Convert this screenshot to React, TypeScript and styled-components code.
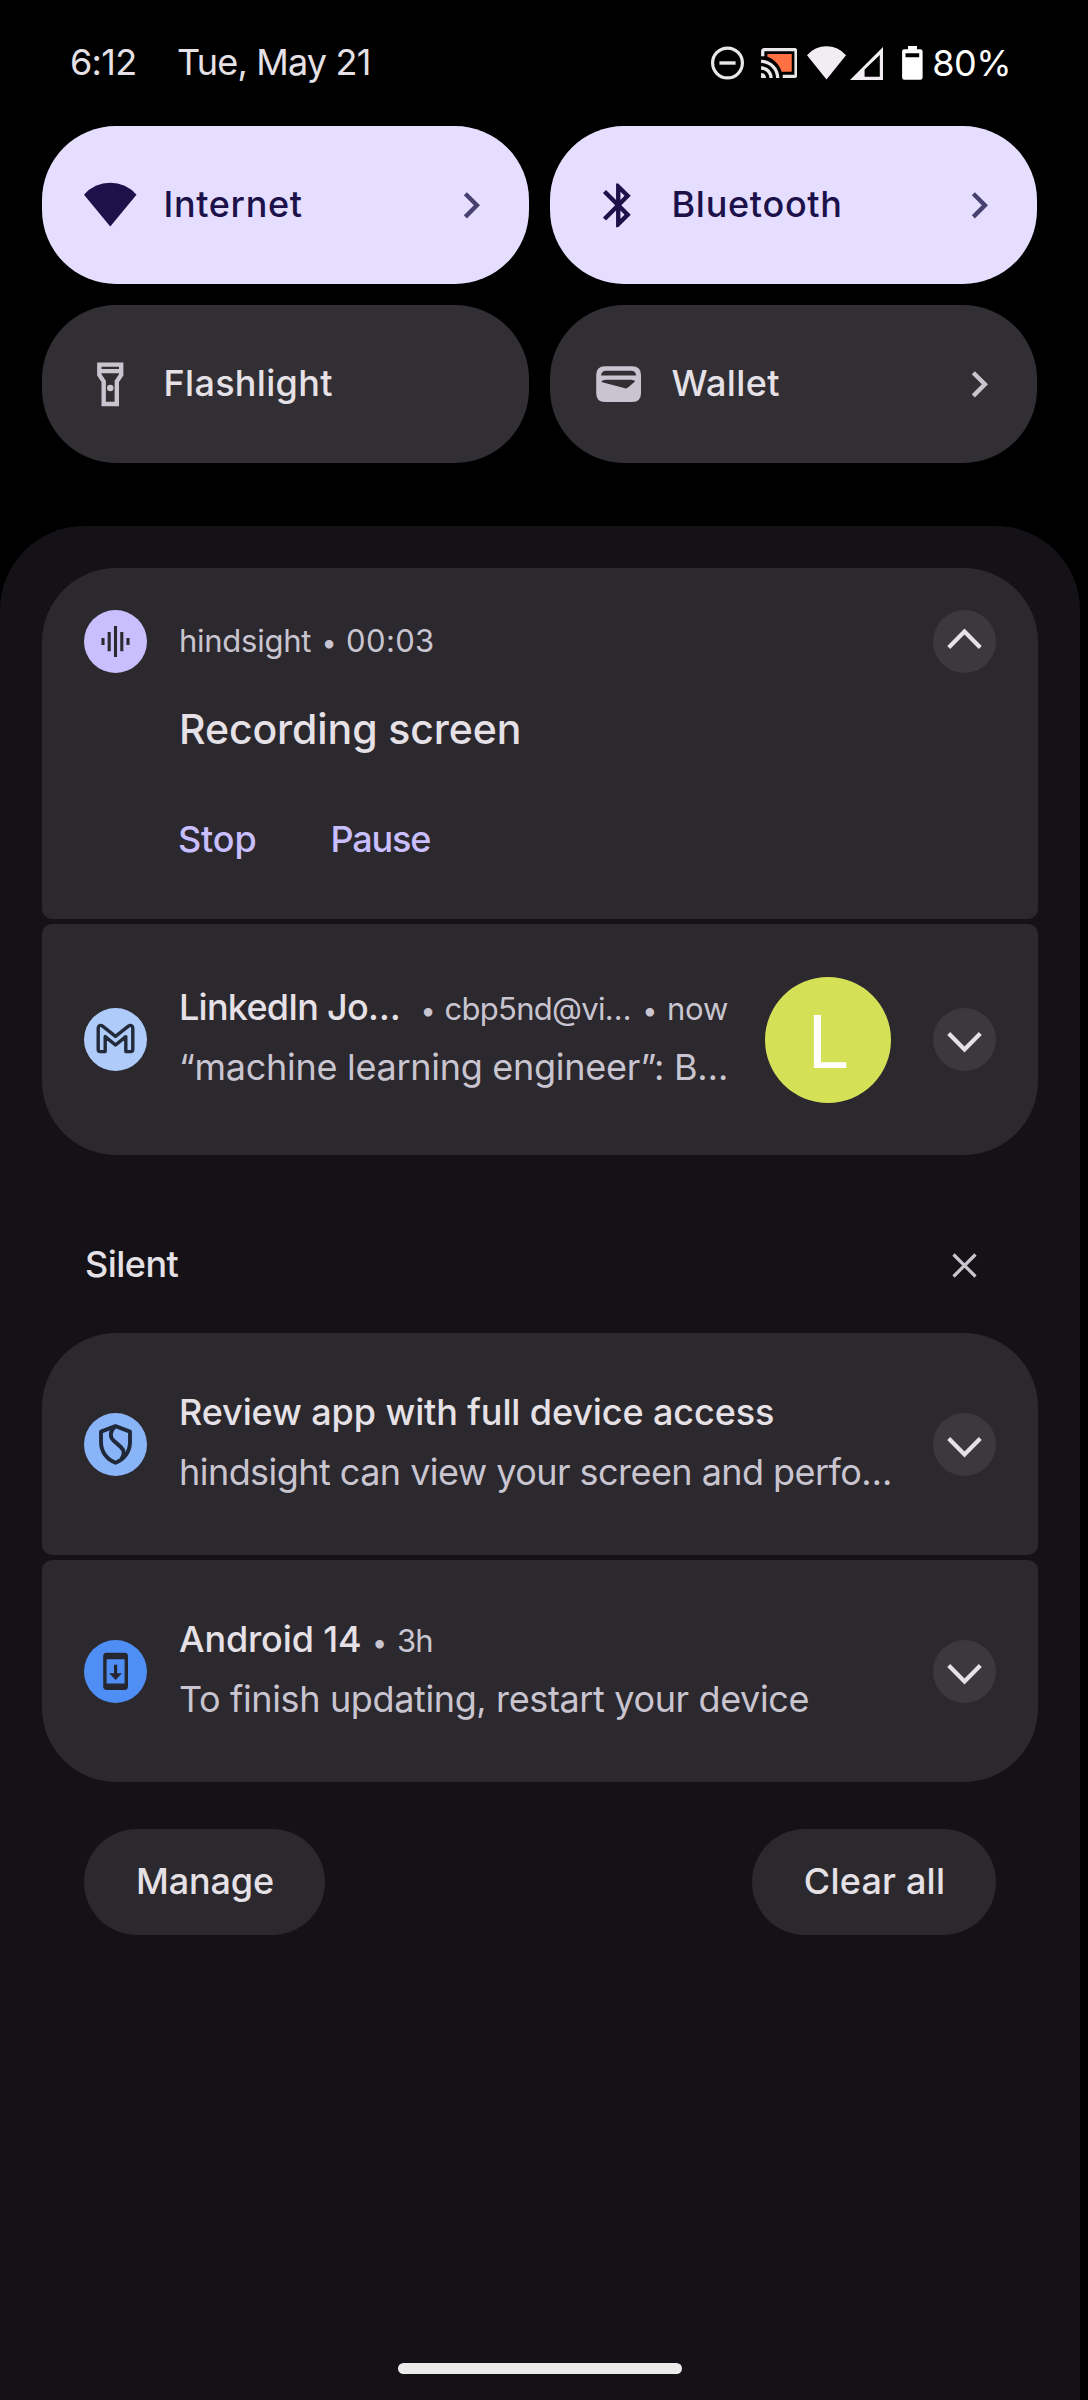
import React from 'react';
import styled, { createGlobalStyle } from 'styled-components';

const GlobalStyle = createGlobalStyle`
  *, *::before, *::after { box-sizing: border-box; }
  html, body { margin: 0; padding: 0; background: #000; }
  body { font-family: Inter, Roboto, sans-serif; }
  button { font-family: inherit; border: 0; margin: 0; padding: 0; background: none; }
  svg { display: block; flex: none; }
`;

const Screen = styled.div`
  width: 1088px;
  height: 2400px;
  display: flex;
  flex-direction: column;
  background: #000;
  overflow: hidden;
`;

const StatusBar = styled.header`
  height: 126px;
  padding: 0 77px 0 70px;
  display: flex;
  align-items: center;
  justify-content: space-between;
`;

const Label = styled.span<{ $size?: number; $weight?: number; $tracking?: number; $color?: string }>`
  font-size: ${p => p.$size ?? 36}px;
  font-weight: ${p => p.$weight ?? 400};
  letter-spacing: ${p => p.$tracking ?? 0}px;
  color: ${p => p.$color ?? '#e5e1e6'};
  line-height: 60px;
  white-space: nowrap;
`;

const ClockGroup = styled.div`
  display: grid;
  grid-template-columns: 107px auto;
  margin-bottom: 2px;
`;

const StatusIcons = styled.div`
  display: flex;
  align-items: center;
`;

const IconSlot = styled.span<{ $after: number }>`
  display: flex;
  margin-right: ${p => p.$after}px;
`;

const Tiles = styled.section`
  width: 995px;
  margin-left: 42px;
  display: grid;
  grid-template-columns: 1fr 1fr;
  grid-auto-rows: 158px;
  gap: 21px;
`;

const Tile = styled.button<{ $active?: boolean }>`
  display: flex;
  align-items: center;
  padding: 0 32px 0 42px;
  border-radius: 74px;
  background: ${p => (p.$active ? '#e5deff' : '#312f34')};
  color: ${p => (p.$active ? '#1c1149' : '#c9c5d0')};
`;

const TileLabel = styled(Label)`
  flex: 1;
  margin: 0 0 2px 27px;
  text-align: left;
`;

const Shade = styled.main`
  width: 1080px;
  flex: 1;
  margin-top: 63px;
  padding: 42px 42px 26px;
  display: flex;
  flex-direction: column;
  border-radius: 84px 84px 0 0;
  background: #141217;
`;

const Group = styled.section`
  display: flex;
  flex-direction: column;
  gap: 5px;
`;

const Card = styled.article<{ $height: number }>`
  height: ${p => p.$height}px;
  padding: 0 42px;
  display: flex;
  align-items: center;
  border-radius: 10px;
  background: #2b282e;

  &:first-child { border-top-left-radius: 74px; border-top-right-radius: 74px; }
  &:last-child { border-bottom-left-radius: 74px; border-bottom-right-radius: 74px; }
`;

const ExpandedCard = styled(Card)`
  flex-direction: column;
  align-items: stretch;
  padding-top: 42px;
`;

const HeaderRow = styled.div`
  height: 63px;
  display: flex;
  align-items: center;
`;

const AppIcon = styled.span<{ $color: string }>`
  width: 63px;
  height: 63px;
  flex: none;
  border-radius: 50%;
  background: ${p => p.$color};
`;

const ExpandButton = styled.button`
  width: 63px;
  height: 63px;
  flex: none;
  border-radius: 50%;
  background: #3b383e;
`;

const Body = styled.div<{ $lift?: number }>`
  flex: 1;
  min-width: 0;
  margin: 0 0 ${p => p.$lift ?? 0}px 32px;
  display: flex;
  flex-direction: column;
`;

const TextLine = styled.div`
  height: 60px;
  display: flex;
  align-items: baseline;
`;

const Dot = styled.span<{ $before: number; $after: number }>`
  width: 8px;
  margin: 0 ${p => p.$after}px 0 ${p => p.$before}px;
  display: flex;
  justify-content: center;
  font-size: 27px;
  line-height: 60px;
  color: #c9c5d0;
`;

const ExpandedTitle = styled(Label)`
  margin: 26px 0 0 95px;
`;

const Actions = styled.div`
  margin: 50px 0 0 94px;
  display: flex;
  gap: 74px;
`;

const Avatar = styled.span`
  width: 126px;
  height: 126px;
  flex: none;
  margin-right: 42px;
  padding-top: 5px;
  display: flex;
  align-items: center;
  justify-content: center;
  border-radius: 50%;
  background: #d4e157;
  color: #fff;
  font: 400 75px/1 Roboto, sans-serif;
`;

const SectionHeader = styled.div`
  height: 178px;
  padding: 42px 42px 0;
  display: flex;
  align-items: center;
  justify-content: space-between;
`;

const SectionTitle = styled(Label)`
  margin: 0 0 3px 1px;
`;

const ClearSection = styled.button`
  width: 63px;
  height: 63px;
  display: flex;
  align-items: center;
  justify-content: center;
`;

const Footer = styled.div`
  margin-top: 47px;
  padding: 0 42px;
  display: flex;
  justify-content: space-between;
`;

const FooterButton = styled.button<{ $width: number }>`
  width: ${p => p.$width}px;
  height: 106px;
  padding: 0 0 3px 1px;
  border-radius: 53px;
  background: #2b282e;
`;

const HomeHandle = styled.div`
  width: 284px;
  height: 11px;
  margin: auto auto 0;
  border-radius: 6px;
  background: #ecebec;
`;

const MUTED = '#c9c5d0';
const INK = '#2b282e';

const TileChevron = ({ color }: { color: string }) => (
  <svg width="52.5" height="52.5" viewBox="0 0 24 24" fill={color}>
    <path d="M10 6 8.59 7.41 13.17 12l-4.58 4.59L10 18l6-6z" />
  </svg>
);

const Expand = ({ up }: { up?: boolean }) => (
  <ExpandButton>
    <svg width="63" height="63" viewBox="0 0 63 63" fill="none" stroke="#e5e1e6" strokeWidth="4.2">
      <path d={up ? 'M15.7 37.6 31.5 21.6 47.3 37.6' : 'M15.7 25.4 31.5 41.4 47.3 25.4'} />
    </svg>
  </ExpandButton>
);

const WifiIcon = () => (
  <svg width="52.5" height="52.5" viewBox="0 0 52.5 52.5" fill="currentColor">
    <path d="M0 15.7A34.6 34.6 0 0 1 52.5 15.7L26.25 47.5z" />
  </svg>
);

const BluetoothIcon = () => (
  <svg width="52.5" height="52.5" viewBox="0 0 24 24" fill="currentColor">
    <path d="M17.71 7.71 12 2h-1v7.59L6.41 5 5 6.41 10.59 12 5 17.59 6.41 19 11 14.41V22h1l5.71-5.71L13.41 12l4.3-4.29zM13 5.83l1.88 1.88L13 9.59V5.83zm1.88 10.46L13 18.17v-3.76l1.88 1.88z" />
  </svg>
);

const FlashlightIcon = () => (
  <svg width="52.5" height="52.5" viewBox="0 0 24 24" fill="currentColor">
    <path d="M18 2H6v6l2 3v11h8V11l2-3V2zm-2 2v1H8V4h8zm-2 6.4V20h-4v-9.61l-2-3V7h8v.39l-2 3.01z" />
    <circle cx="12" cy="13.7" r="1.5" />
  </svg>
);

const WalletIcon = () => (
  <svg width="52.5" height="52.5" viewBox="0 0 52.5 52.5" fill="currentColor" fillRule="evenodd">
    <path d="M13 8.3H40.2Q49 8.3 49 17.1V35.3Q49 44.1 40.2 44.1H13Q4.2 44.1 4.2 35.3V17.1Q4.2 8.3 13 8.3ZM9 17.4H44.2Q43.6 12.7 39.2 12.7H14Q9.6 12.7 9 17.4ZM9.4 24.1 33 30.3Q34.7 30.7 36 29.6L43.2 23.2Q42 21.7 39.2 21.7H14Q10.4 21.7 9.4 24.1Z" />
  </svg>
);

const DndIcon = () => (
  <svg width="33" height="34" viewBox="0 0 33 34" fill="none" stroke="#e9e7ea" strokeWidth="3.2">
    <circle cx="16.5" cy="17" r="14.9" />
    <path d="M8.4 17h16.2" strokeWidth="3.4" />
  </svg>
);

const CastIcon = () => (
  <svg width="36.8" height="30" viewBox="1 3 22 18" fill="#e9e7ea">
    <path fill="#ff7043" d="M19.4 6.6H4.8V8.3c4 1.4 7.3 4.8 8.5 8.9h6.1z" />
    <path d="M1 18v3h3c0-1.66-1.34-3-3-3zm0-4v2c2.76 0 5 2.24 5 5h2c0-3.87-3.13-7-7-7zm0-4v2c4.97 0 9 4.03 9 9h2c0-6.08-4.93-11-11-11zm20-7H3c-1.1 0-2 .9-2 2v3h2V5h18v14h-7v2h7c1.1 0 2-.9 2-2V5c0-1.1-.9-2-2-2z" />
  </svg>
);

const StatusWifiIcon = () => (
  <svg width="39" height="34" viewBox="0 0 39 34" fill="#f1edf3">
    <path d="M0 9.2A25.6 25.6 0 0 1 39 9.2L19.5 33.5z" />
  </svg>
);

const SignalIcon = () => (
  <svg width="33" height="33" viewBox="0 0 33 33" fill="#f1edf3" fillRule="evenodd">
    <path d="M33 0V33H0zM29.8 8 14.6 22.4V29.8H29.8z" />
  </svg>
);

const BatteryIcon = () => (
  <svg width="21" height="34" viewBox="0 0 21 34" fill="#fff" fillRule="evenodd">
    <path d="M6 0h9v3.2h3.4q2.2 0 2.2 2.2v26.2q0 2.2-2.2 2.2H2.3Q.1 33.8.1 31.6V5.4q0-2.2 2.2-2.2H6zM3.5 7.2v4h13.7v-4z" />
  </svg>
);

const WaveIcon = () => (
  <svg width="63" height="63" viewBox="0 0 63 63" stroke={INK} strokeWidth="3.1">
    <path d="M19 28v7M25.2 22v19.2M31.5 16v31M37.8 22v19.2M44 28v7" />
  </svg>
);

const MailIcon = () => (
  <svg width="63" height="63" viewBox="0 0 63 63" fill="none" stroke="#232b3a" strokeWidth="3.4" strokeLinejoin="round">
    <path d="M14.2 41.5V20C14.2 17.3 16.6 16.7 18.6 18.2L31.5 28.3L44.4 18.2C46.4 16.7 48.8 17.3 48.8 20V41.5Q48.8 43.6 46.7 43.6H41.8V28.6L31.5 37L21.2 28.6V43.6H16.3Q14.2 43.6 14.2 41.5Z" />
  </svg>
);

const ShieldIcon = () => (
  <svg width="63" height="63" viewBox="0 0 63 63" fill="none" stroke="#20293a" strokeWidth="3.9" strokeLinejoin="round">
    <path d="M31.5 13.2 46 18.6V29C46 39 40 46.6 31.5 49.8C23 46.6 17 39 17 29V18.6Z" />
    <path d="M30.5 14C26.2 18 25.6 23.6 29.2 27.2L36.8 34C40.8 37.8 40.2 42 37.5 46" />
  </svg>
);

const UpdateIcon = () => (
  <svg width="63" height="63" viewBox="0 0 63 63" fill="#25262f" fillRule="evenodd">
    <path d="M22.6 12.7H40.6Q44 12.7 44 16.1V46.6Q44 50 40.6 50H22.6Q19.2 50 19.2 46.6V16.1Q19.2 12.7 22.6 12.7ZM22.6 19.3V43.6H40.6V19.3Z" />
    <path d="M30 24.7h3.2v8.5h4.7L31.6 40l-6.4-6.8H30z" />
  </svg>
);

export default function App() {
  return (
    <>
      <GlobalStyle />
      <Screen>
        <StatusBar>
          <ClockGroup>
            <Label $tracking={-0.7}>6:12</Label>
            <Label $tracking={-0.82}>Tue, May 21</Label>
          </ClockGroup>
          <StatusIcons>
            <IconSlot $after={17}><DndIcon /></IconSlot>
            <IconSlot $after={10}><CastIcon /></IconSlot>
            <IconSlot $after={3.5}><StatusWifiIcon /></IconSlot>
            <IconSlot $after={19}><SignalIcon /></IconSlot>
            <IconSlot $after={9.5}><BatteryIcon /></IconSlot>
            <Label $tracking={-0.56} $color="#fff">80%</Label>
          </StatusIcons>
        </StatusBar>

        <Tiles>
          <Tile $active>
            <WifiIcon />
            <TileLabel $weight={500} $tracking={0.65} $color="#1c1149">Internet</TileLabel>
            <TileChevron color="#48406f" />
          </Tile>
          <Tile $active>
            <BluetoothIcon />
            <TileLabel $weight={500} $tracking={0.71} $color="#1c1149">Bluetooth</TileLabel>
            <TileChevron color="#48406f" />
          </Tile>
          <Tile>
            <FlashlightIcon />
            <TileLabel $weight={500} $tracking={0.31}>Flashlight</TileLabel>
          </Tile>
          <Tile>
            <WalletIcon />
            <TileLabel $weight={500} $tracking={0.35}>Wallet</TileLabel>
            <TileChevron color={MUTED} />
          </Tile>
        </Tiles>

        <Shade>
          <Group>
            <ExpandedCard $height={351}>
              <HeaderRow>
                <AppIcon $color="#c9bfff"><WaveIcon /></AppIcon>
                <Body $lift={2}>
                  <TextLine>
                    <Label $size={31} $tracking={-0.27} $color={MUTED}>hindsight</Label>
                    <Dot $before={14} $after={13}>•</Dot>
                    <Label $size={31} $tracking={0.35} $color={MUTED}>00:03</Label>
                  </TextLine>
                </Body>
                <Expand up />
              </HeaderRow>
              <ExpandedTitle $size={41} $weight={500} $tracking={-0.1}>Recording screen</ExpandedTitle>
              <Actions>
                <Label $weight={500} $tracking={-0.17} $color="#c9bfff">Stop</Label>
                <Label $weight={500} $tracking={-1.19} $color="#c9bfff">Pause</Label>
              </Actions>
            </ExpandedCard>

            <Card $height={231}>
              <AppIcon $color="#aecbfa"><MailIcon /></AppIcon>
              <Body $lift={5}>
                <TextLine>
                  <Label $weight={500} $tracking={-0.75}>LinkedIn Jo…</Label>
                  <Dot $before={24} $after={12.5}>•</Dot>
                  <Label $size={31} $tracking={-0.72} $color={MUTED}>cbp5nd@vi…</Label>
                  <Dot $before={15} $after={13}>•</Dot>
                  <Label $size={31} $tracking={-0.12} $color={MUTED}>now</Label>
                </TextLine>
                <TextLine>
                  <Label $tracking={-0.28} $color={MUTED}>“machine learning engineer”: B…</Label>
                </TextLine>
              </Body>
              <Avatar>L</Avatar>
              <Expand />
            </Card>
          </Group>

          <SectionHeader>
            <SectionTitle $weight={500} $tracking={-0.53}>Silent</SectionTitle>
            <ClearSection>
              <svg width="25" height="25" viewBox="0 0 25 25" stroke={MUTED} strokeWidth="3.2">
                <path d="M1.5 1.5 23.5 23.5M23.5 1.5 1.5 23.5" />
              </svg>
            </ClearSection>
          </SectionHeader>

          <Group>
            <Card $height={222}>
              <AppIcon $color="#8ab4f8"><ShieldIcon /></AppIcon>
              <Body $lift={5}>
                <TextLine>
                  <Label $weight={500} $tracking={-0.11}>Review app with full device access</Label>
                </TextLine>
                <TextLine>
                  <Label $tracking={-0.55} $color={MUTED}>hindsight can view your screen and perfo…</Label>
                </TextLine>
              </Body>
              <Expand />
            </Card>

            <Card $height={222}>
              <AppIcon $color="#4f8ff5"><UpdateIcon /></AppIcon>
              <Body $lift={4}>
                <TextLine>
                  <Label $weight={500} $tracking={-0.14}>Android 14</Label>
                  <Dot $before={14} $after={13.5}>•</Dot>
                  <Label $size={31} $tracking={-1} $color={MUTED}>3h</Label>
                </TextLine>
                <TextLine>
                  <Label $tracking={-0.37} $color={MUTED}>To finish updating, restart your device</Label>
                </TextLine>
              </Body>
              <Expand />
            </Card>
          </Group>

          <Footer>
            <FooterButton $width={241}><Label $weight={500} $tracking={-0.14}>Manage</Label></FooterButton>
            <FooterButton $width={244}><Label $weight={500} $tracking={0.2}>Clear all</Label></FooterButton>
          </Footer>

          <HomeHandle />
        </Shade>
      </Screen>
    </>
  );
}
